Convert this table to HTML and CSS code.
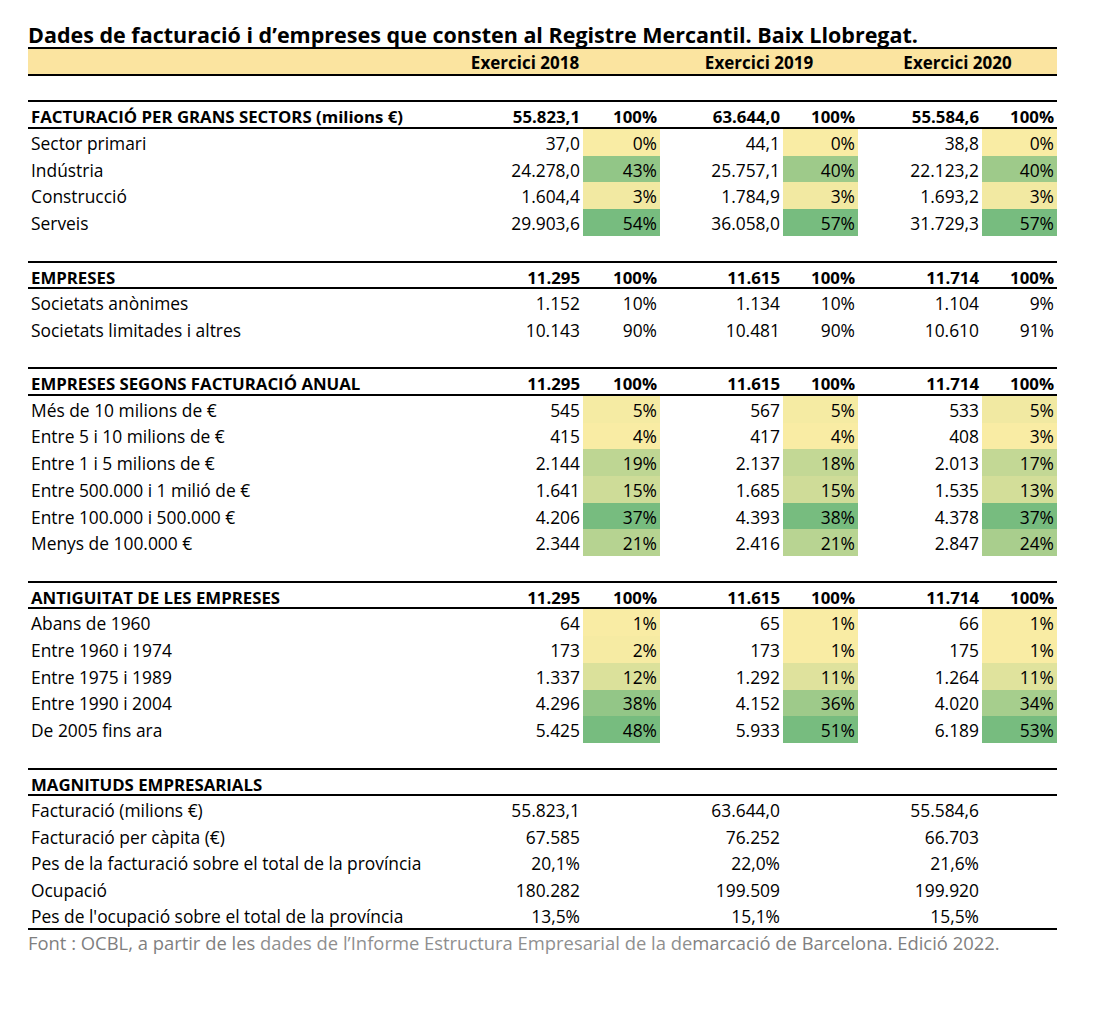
FILE: index.html
```html
<!DOCTYPE html>
<html lang="ca">
<head>
<meta charset="utf-8">
<title>Dades de facturació i d'empreses</title>
<link rel="stylesheet" href="styles.css">
</head>
<body>
<div class="sheet">
  <div class="title">Dades de facturació i d’empreses que consten al Registre Mercantil. Baix Llobregat.</div>

  <div class="row head">
    <span></span>
    <span class="year">Exercici 2018</span>
    <span class="year">Exercici 2019</span>
    <span class="year">Exercici 2020</span>
  </div>
  <div class="row blank ruled"></div>

  <div class="row sec ruled">
    <span class="lbl">FACTURACIÓ PER GRANS SECTORS (milions €)</span>
    <span class="num">55.823,1</span><span class="pct">100%</span>
    <span class="num">63.644,0</span><span class="pct">100%</span>
    <span class="num">55.584,6</span><span class="pct">100%</span>
  </div>
  <div class="row">
    <span class="lbl">Sector primari</span>
    <span class="num">37,0</span><span class="pct" style="background:rgb(249,236,164)">0%</span>
    <span class="num">44,1</span><span class="pct" style="background:rgb(249,236,164)">0%</span>
    <span class="num">38,8</span><span class="pct" style="background:rgb(249,236,164)">0%</span>
  </div>
  <div class="row">
    <span class="lbl">Indústria</span>
    <span class="num">24.278,0</span><span class="pct" style="background:rgb(146,198,135)">43%</span>
    <span class="num">25.757,1</span><span class="pct" style="background:rgb(158,202,138)">40%</span>
    <span class="num">22.123,2</span><span class="pct" style="background:rgb(158,202,138)">40%</span>
  </div>
  <div class="row">
    <span class="lbl">Construcció</span>
    <span class="num">1.604,4</span><span class="pct" style="background:rgb(242,233,162)">3%</span>
    <span class="num">1.784,9</span><span class="pct" style="background:rgb(242,233,162)">3%</span>
    <span class="num">1.693,2</span><span class="pct" style="background:rgb(242,233,162)">3%</span>
  </div>
  <div class="row">
    <span class="lbl">Serveis</span>
    <span class="num">29.903,6</span><span class="pct" style="background:rgb(119,188,127)">54%</span>
    <span class="num">36.058,0</span><span class="pct" style="background:rgb(119,188,127)">57%</span>
    <span class="num">31.729,3</span><span class="pct" style="background:rgb(119,188,127)">57%</span>
  </div>
  <div class="row blank ruled"></div>

  <div class="row sec ruled">
    <span class="lbl">EMPRESES</span>
    <span class="num">11.295</span><span class="pct">100%</span>
    <span class="num">11.615</span><span class="pct">100%</span>
    <span class="num">11.714</span><span class="pct">100%</span>
  </div>
  <div class="row">
    <span class="lbl">Societats anònimes</span>
    <span class="num">1.152</span><span class="pct">10%</span>
    <span class="num">1.134</span><span class="pct">10%</span>
    <span class="num">1.104</span><span class="pct">9%</span>
  </div>
  <div class="row">
    <span class="lbl">Societats limitades i altres</span>
    <span class="num">10.143</span><span class="pct">90%</span>
    <span class="num">10.481</span><span class="pct">90%</span>
    <span class="num">10.610</span><span class="pct">91%</span>
  </div>
  <div class="row blank ruled"></div>

  <div class="row sec ruled">
    <span class="lbl">EMPRESES SEGONS FACTURACIÓ ANUAL</span>
    <span class="num">11.295</span><span class="pct">100%</span>
    <span class="num">11.615</span><span class="pct">100%</span>
    <span class="num">11.714</span><span class="pct">100%</span>
  </div>
  <div class="row">
    <span class="lbl">Més de 10 milions de €</span>
    <span class="num">545</span><span class="pct" style="background:rgb(245,235,163)">5%</span>
    <span class="num">567</span><span class="pct" style="background:rgb(245,235,163)">5%</span>
    <span class="num">533</span><span class="pct" style="background:rgb(241,233,162)">5%</span>
  </div>
  <div class="row">
    <span class="lbl">Entre 5 i 10 milions de €</span>
    <span class="num">415</span><span class="pct" style="background:rgb(249,236,164)">4%</span>
    <span class="num">417</span><span class="pct" style="background:rgb(249,236,164)">4%</span>
    <span class="num">408</span><span class="pct" style="background:rgb(249,236,164)">3%</span>
  </div>
  <div class="row">
    <span class="lbl">Entre 1 i 5 milions de €</span>
    <span class="num">2.144</span><span class="pct" style="background:rgb(190,214,147)">19%</span>
    <span class="num">2.137</span><span class="pct" style="background:rgb(195,216,149)">18%</span>
    <span class="num">2.013</span><span class="pct" style="background:rgb(195,216,149)">17%</span>
  </div>
  <div class="row">
    <span class="lbl">Entre 500.000 i 1 milió de €</span>
    <span class="num">1.641</span><span class="pct" style="background:rgb(206,220,152)">15%</span>
    <span class="num">1.685</span><span class="pct" style="background:rgb(207,220,152)">15%</span>
    <span class="num">1.535</span><span class="pct" style="background:rgb(211,222,153)">13%</span>
  </div>
  <div class="row">
    <span class="lbl">Entre 100.000 i 500.000 €</span>
    <span class="num">4.206</span><span class="pct" style="background:rgb(119,188,127)">37%</span>
    <span class="num">4.393</span><span class="pct" style="background:rgb(119,188,127)">38%</span>
    <span class="num">4.378</span><span class="pct" style="background:rgb(119,188,127)">37%</span>
  </div>
  <div class="row">
    <span class="lbl">Menys de 100.000 €</span>
    <span class="num">2.344</span><span class="pct" style="background:rgb(182,211,145)">21%</span>
    <span class="num">2.416</span><span class="pct" style="background:rgb(184,212,146)">21%</span>
    <span class="num">2.847</span><span class="pct" style="background:rgb(169,206,141)">24%</span>
  </div>
  <div class="row blank ruled"></div>

  <div class="row sec ruled">
    <span class="lbl">ANTIGUITAT DE LES EMPRESES</span>
    <span class="num">11.295</span><span class="pct">100%</span>
    <span class="num">11.615</span><span class="pct">100%</span>
    <span class="num">11.714</span><span class="pct">100%</span>
  </div>
  <div class="row">
    <span class="lbl">Abans de 1960</span>
    <span class="num">64</span><span class="pct" style="background:rgb(249,236,164)">1%</span>
    <span class="num">65</span><span class="pct" style="background:rgb(249,236,164)">1%</span>
    <span class="num">66</span><span class="pct" style="background:rgb(249,236,164)">1%</span>
  </div>
  <div class="row">
    <span class="lbl">Entre 1960 i 1974</span>
    <span class="num">173</span><span class="pct" style="background:rgb(246,235,163)">2%</span>
    <span class="num">173</span><span class="pct" style="background:rgb(249,236,164)">1%</span>
    <span class="num">175</span><span class="pct" style="background:rgb(249,236,164)">1%</span>
  </div>
  <div class="row">
    <span class="lbl">Entre 1975 i 1989</span>
    <span class="num">1.337</span><span class="pct" style="background:rgb(219,225,155)">12%</span>
    <span class="num">1.292</span><span class="pct" style="background:rgb(223,226,157)">11%</span>
    <span class="num">1.264</span><span class="pct" style="background:rgb(224,227,157)">11%</span>
  </div>
  <div class="row">
    <span class="lbl">Entre 1990 i 2004</span>
    <span class="num">4.296</span><span class="pct" style="background:rgb(147,198,135)">38%</span>
    <span class="num">4.152</span><span class="pct" style="background:rgb(158,202,138)">36%</span>
    <span class="num">4.020</span><span class="pct" style="background:rgb(166,206,141)">34%</span>
  </div>
  <div class="row">
    <span class="lbl">De 2005 fins ara</span>
    <span class="num">5.425</span><span class="pct" style="background:rgb(119,188,127)">48%</span>
    <span class="num">5.933</span><span class="pct" style="background:rgb(119,188,127)">51%</span>
    <span class="num">6.189</span><span class="pct" style="background:rgb(119,188,127)">53%</span>
  </div>
  <div class="row blank ruled"></div>

  <div class="row sec ruled">
    <span class="lbl">MAGNITUDS EMPRESARIALS</span>
  </div>
  <div class="row">
    <span class="lbl">Facturació (milions €)</span>
    <span class="num">55.823,1</span><span class="pct"></span>
    <span class="num">63.644,0</span><span class="pct"></span>
    <span class="num">55.584,6</span><span class="pct"></span>
  </div>
  <div class="row">
    <span class="lbl">Facturació per càpita (€)</span>
    <span class="num">67.585</span><span class="pct"></span>
    <span class="num">76.252</span><span class="pct"></span>
    <span class="num">66.703</span><span class="pct"></span>
  </div>
  <div class="row">
    <span class="lbl">Pes de la facturació sobre el total de la província</span>
    <span class="num">20,1%</span><span class="pct"></span>
    <span class="num">22,0%</span><span class="pct"></span>
    <span class="num">21,6%</span><span class="pct"></span>
  </div>
  <div class="row">
    <span class="lbl">Ocupació</span>
    <span class="num">180.282</span><span class="pct"></span>
    <span class="num">199.509</span><span class="pct"></span>
    <span class="num">199.920</span><span class="pct"></span>
  </div>
  <div class="row ruled">
    <span class="lbl">Pes de l'ocupació sobre el total de la província</span>
    <span class="num">13,5%</span><span class="pct"></span>
    <span class="num">15,1%</span><span class="pct"></span>
    <span class="num">15,5%</span><span class="pct"></span>
  </div>

  <div class="source"><span class="src-a">Font : OCBL, a partir de les </span><span class="src-b">dades de l’Informe Estructura Empresarial de la de</span><span class="src-a">marcació de Barcelona. Edició 2022.</span></div>
</div>
</body>
</html>
```
FILE: styles.css
```css
html, body {
  margin: 0;
  padding: 0;
  background: #ffffff;
}

body {
  font-family: "Open Sans", "Noto Sans", "Liberation Sans", sans-serif;
  color: #000000;
}

.sheet {
  width: 1029px;
  margin-left: 28px;
  padding-top: 22px;
}

.title {
  box-sizing: border-box;
  height: 27px;
  border-bottom: 2px solid #000;
  font-size: 21.5px;
  font-weight: 700;
  line-height: 25px;
  white-space: nowrap;
}

.row {
  box-sizing: border-box;
  height: 26.7px;
  display: grid;
  grid-template-columns: 362px 193px 77px 123px 75px 124px 75px;
  align-items: stretch;
  font-size: 17.4px;
  white-space: nowrap;
}

.row > span {
  display: flex;
  align-items: center;
  min-width: 0;
  padding-top: 1px;
}

.ruled {
  border-bottom: 2px solid #000;
}

.head {
  background: #fbe4a0;
  border-bottom: 2px solid #000;
  grid-template-columns: 362px 270px 198px 199px;
  font-weight: 700;
  font-size: 17px;
}

.head .year {
  justify-content: center;
  padding-top: 2px;
}

.sec {
  font-weight: 700;
  font-size: 16.8px;
}

.sec > span {
  padding-top: 3px;
}

.lbl {
  padding-left: 3px;
  overflow: visible;
}

.num {
  justify-content: flex-end;
  padding-right: 3px;
}

.pct {
  justify-content: flex-end;
  padding-right: 3px;
}

.source {
  padding-top: 2px;
  font-size: 18.4px;
  line-height: 22px;
  white-space: nowrap;
}

.src-a {
  color: #7f7f7f;
}

.src-b {
  color: #8f8f8f;
}
```
